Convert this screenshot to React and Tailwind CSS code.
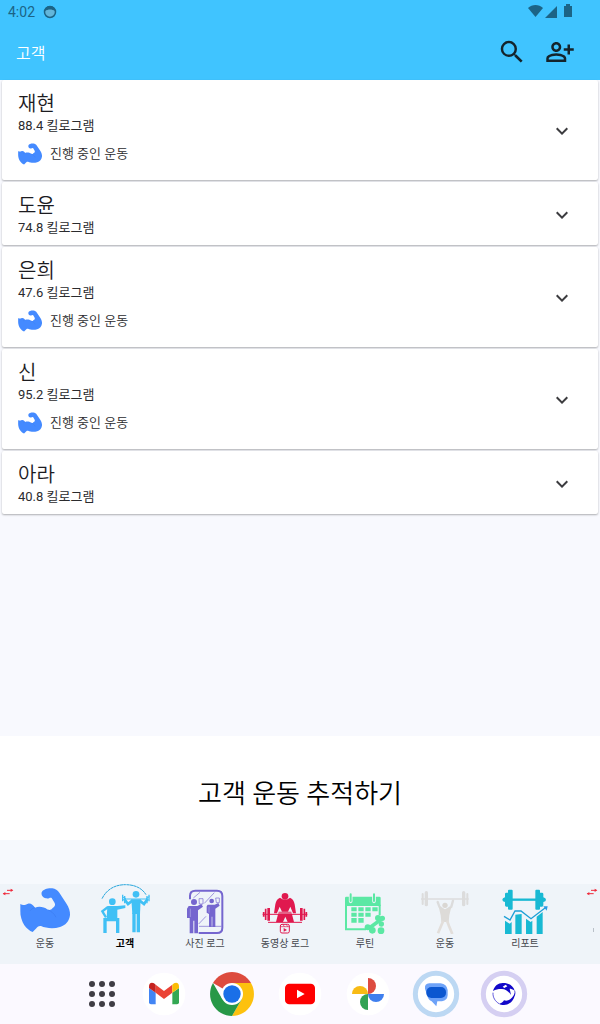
import { MdSearch, MdOutlinePersonAddAlt, MdExpandMore } from "react-icons/md";

const clients = [
  { name: "재현", weight: "88.4 킬로그램", active: true },
  { name: "도윤", weight: "74.8 킬로그램", active: false },
  { name: "은희", weight: "47.6 킬로그램", active: true },
  { name: "신", weight: "95.2 킬로그램", active: true },
  { name: "아라", weight: "40.8 킬로그램", active: false },
];

const MUSCLE =
  "M61 84C70 90 76 86 84 83C93 81 99 87 105 95C116 90 132 92 143 101C149 104 155 100 158 96C164 92 167 87 164 81L155 66C150 63 146 69 138 67C128 65 123 58 125 49C128 39 148 35 157 37C166 38 173 43 178 50L200 84C206 93 211 106 210 117C208 136 196 148 180 153C161 159 138 157 123 150C115 149 112 153 109 157L98 168C88 165 80 157 73 148C66 136 60 120 61 104Z";

function MuscleIcon({ className, viewBox = "60 30 150 144" }) {
  return (
    <svg viewBox={viewBox} className={className} aria-hidden="true">
      <path d={MUSCLE} fill="#448aff" />
      <path d="M143 101C152 105 162 111 168 124M105 95C99 97 94 99 91 104" fill="none" stroke="#3b7bf0" strokeWidth="2" />
    </svg>
  );
}

function ExerciseIcon() {
  return <MuscleIcon className="h-[50px] w-[54px]" viewBox="54 24 162 150" />;
}

function ClientsIcon() {
  return (
    <svg viewBox="294 24 162 150" className="h-[50px] w-[54px]" fill="none" stroke="#40c0f5" aria-hidden="true">
      <path d="M306 68C322 36 350 26 376 26C404 26 426 36 438 56" strokeWidth="3" stroke="#2aa7dc" strokeDasharray="9 1" />
      <g fill="#40c0f5" stroke="none">
        <circle cx="337" cy="77" r="10" />
        <circle cx="408" cy="55" r="10" />
        <path d="M322 90H352L376 88V96L352 101V128H320Z" />
        <path d="M394 70H422L420 114H397Z" />
      </g>
      <path d="M324 93L307 106L318 124" strokeWidth="7" />
      <path d="M336 131H315V171M334 131H353V171" strokeWidth="10" />
      <path d="M366 62L380 69H436L448 62" strokeWidth="3" />
      <path d="M398 73L384 84L372 68M418 73L432 84L443 68" strokeWidth="8" />
      <path d="M368 56V76M374 60V82M441 60V82M447 56V76" strokeWidth="4" />
      <path d="M402 110V169M415 110V169" strokeWidth="10" />
    </svg>
  );
}

function PhotoLogIcon() {
  return (
    <svg viewBox="54 24 162 150" className="h-[50px] w-[54px]" fill="none" stroke="#7566cf" aria-hidden="true">
      <path d="M90 70V60Q90 44 106 44H171Q187 44 187 60V155Q187 171 171 171H116" strokeWidth="6" />
      <path d="M100 66L120 49M133 82L163 50M116 144L138 121M117 151H184" strokeWidth="2" />
      <g fill="#7566cf" stroke="none">
        <circle cx="102" cy="78" r="9" />
        <circle cx="155" cy="75" r="7" />
        <path d="M86 90H112L124 84L129 92L114 103V172H103V134H100V172H89V126H81V98Z" />
        <path d="M143 86H164L175 81L179 89L166 98V153H157V122H155V153H147V114L140 110V91Z" />
      </g>
      <path d="M117 68H129V84H118ZM167 66H178V80H169Z" strokeWidth="2" />
      <path d="M91 98V123M147 92V110" stroke="#eff4f9" strokeWidth="1" />
    </svg>
  );
}

function VideoLogIcon() {
  return (
    <svg viewBox="294 24 162 150" className="h-[50px] w-[54px]" fill="none" stroke="#e0194f" aria-hidden="true">
      <path d="M308 115H442" strokeWidth="3" />
      <path d="M311 108V122M317 98V132M433 98V132M439 108V122" strokeWidth="5" />
      <path d="M326 96V134M424 96V134" strokeWidth="8" />
      <g fill="#e0194f" stroke="none">
        <circle cx="375" cy="61" r="10" />
        <path d="M360 65Q375 76 390 65Q401 69 404 85L408 112H399L391 92L384 107H366L359 92L351 112H342L346 85Q349 69 360 65Z" />
        <path d="M356 107H394L402 138H383L376 122L369 138H348Z" />
      </g>
      <path d="M352 111H398" stroke="#eff4f9" strokeWidth="2" />
      <path d="M324 139H426" strokeWidth="3" />
      <rect x="361" y="145" width="27" height="26" rx="5" fill="#eff4f9" strokeWidth="3" />
      <path d="M361 152H388M369 145L373 152M379 145L383 152" strokeWidth="2" />
      <path d="M371 156L381 162L371 167Z" fill="#e0194f" stroke="none" />
    </svg>
  );
}

function RoutineIcon() {
  return (
    <svg viewBox="54 24 162 150" className="h-[50px] w-[54px]" fill="none" stroke="#5be8a4" aria-hidden="true">
      <path d="M75 66Q75 62 79 62H178Q182 62 182 66V90H75Z" fill="#5be8a4" stroke="none" />
      <path d="M78 86V160H138M179 86V118" strokeWidth="6" />
      <path d="M92 54V76M162 54V76" stroke="#eff4f9" strokeWidth="11" strokeLinecap="round" />
      <path d="M92 55V75M162 55V75" strokeWidth="6" strokeLinecap="round" />
      <path
        d="M96 96H108V104H96ZM117 96H129V104H117ZM138 96H150V104H138ZM159 96H171V104H159ZM96 112H108V120H96ZM117 112H129V120H117ZM138 112H150V120H138ZM96 128H108V138H96ZM117 128H129V138H117Z"
        fill="#5be8a4"
        strokeWidth="4"
      />
      <path d="M148 156L184 130" strokeWidth="11" />
      <g fill="#5be8a4" stroke="none">
        <circle cx="143" cy="154" r="9" />
        <circle cx="157" cy="163" r="10" />
        <circle cx="174" cy="126" r="9" />
        <circle cx="187" cy="127" r="8" />
        <circle cx="184" cy="144" r="8" />
        <circle cx="183" cy="164" r="10" />
      </g>
    </svg>
  );
}

function WorkoutIcon() {
  return (
    <svg viewBox="294 24 162 150" className="h-[50px] w-[54px]" fill="none" stroke="#dcdcdc" aria-hidden="true">
      <path d="M303 69H446" strokeWidth="4" />
      <path d="M308 54V84M442 54V84" strokeWidth="6" strokeLinecap="round" />
      <path d="M319 50V86M431 50V86" strokeWidth="10" strokeLinecap="round" />
      <path d="M353 78L358 92L370 102M399 74L394 92L380 102" strokeWidth="7" strokeLinecap="round" />
      <circle cx="375" cy="88" r="8" fill="#dad7d3" stroke="none" />
      <path d="M356 92L375 100L394 92L388 118L386 138H364L362 118Z" fill="#dddbd8" stroke="none" />
      <path d="M370 134L364 148L354 172M381 134L387 150L397 174" strokeWidth="8" stroke="#e2deda" strokeLinejoin="round" />
    </svg>
  );
}

function ReportIcon() {
  return (
    <svg viewBox="84 24 162 150" className="h-[50px] w-[54px]" fill="none" stroke="#18b9d3" aria-hidden="true">
      <path d="M124 71H202" strokeWidth="7" />
      <g fill="#18b9d3" stroke="none">
        <path d="M128 44Q128 41 125 41H117Q114 41 114 44V50H109Q105 50 105 54V64Q97 66 97 71Q97 76 105 78V88Q105 92 109 92H114V98Q114 101 117 101H125Q128 101 128 98Z" />
        <path d="M196 44Q196 41 199 41H207Q210 41 210 44V50H216Q220 50 220 54V64Q228 66 228 71Q228 76 220 78V88Q220 92 216 92H210V98Q210 101 207 101H199Q196 101 196 98Z" />
        <path d="M105 134L119 143L125 138V176H105ZM136 116L155 114V176H136ZM168 128L182 138L187 134V176H168ZM200 122L218 108V176H200Z" />
      </g>
      <path d="M102 121L120 132L135 105H153L183 128L226 95" stroke="#1d9fd6" strokeWidth="4" />
      <path d="M220 91H233L230 104Z" fill="#2b9be6" stroke="none" />
    </svg>
  );
}

function SwapArrows({ className }) {
  return (
    <svg viewBox="0 0 36 24" className={className} fill="none" stroke="#ef2b3d" strokeWidth="3" aria-hidden="true">
      <path d="M15 7H31M4 17H23" />
      <path d="M26 2L34 7L26 12ZM10 12L2 17L10 22Z" fill="#ef2b3d" stroke="none" />
    </svg>
  );
}

const tabs = [
  { label: "운동", icon: ExerciseIcon },
  { label: "고객", icon: ClientsIcon, current: true },
  { label: "사진 로그", icon: PhotoLogIcon },
  { label: "동영상 로그", icon: VideoLogIcon },
  { label: "루틴", icon: RoutineIcon },
  { label: "운동", icon: WorkoutIcon },
  { label: "리포트", icon: ReportIcon },
];

function GmailIcon() {
  return (
    <svg viewBox="210 30 144 144" className="size-12" aria-hidden="true">
      <circle cx="282" cy="102" r="64" fill="#fff" />
      <path d="M237 84L257 98V133H243Q237 133 237 127Z" fill="#4285f4" />
      <path d="M327 84L307 98V133H321Q327 133 327 127Z" fill="#34a853" />
      <path d="M257 74L282 93L307 74V98L282 117L257 98Z" fill="#ea4335" />
      <path d="M237 79C237 67 247 66 252 70L257 74V98L237 84Z" fill="#c5221f" />
      <path d="M327 79C327 67 317 66 312 70L307 74V98L327 84Z" fill="#fbbc04" />
    </svg>
  );
}

function ChromeIcon() {
  return (
    <svg viewBox="414 30 144 144" className="size-12" aria-hidden="true">
      <path d="M486 102L429 69A66 66 0 0 1 543 69Z" fill="#dd4b3e" />
      <path d="M486 69H543A66 66 0 0 1 486 168L515 118Z" fill="#fdc10e" />
      <path d="M429 69A66 66 0 0 0 486 168L515 118L486 102L457 118Z" fill="#279847" />
      <circle cx="486" cy="102" r="33" fill="#fff" />
      <circle cx="486" cy="102" r="26" fill="#1a6fe8" />
    </svg>
  );
}

function YoutubeIcon() {
  return (
    <svg viewBox="48 30 144 144" className="size-12" aria-hidden="true">
      <circle cx="120" cy="102" r="64" fill="#fff" />
      <rect x="75" y="71" width="90" height="62" rx="13" fill="#f00" />
      <path d="M111 89L134 102L111 115Z" fill="#fff" />
    </svg>
  );
}

function PhotosIcon() {
  return (
    <svg viewBox="252 30 144 144" className="size-12" aria-hidden="true">
      <circle cx="324" cy="102" r="64" fill="#fff" />
      <path d="M324 54A24 24 0 0 1 324 102Z" fill="#dd4b40" />
      <path d="M276 102A24 24 0 0 1 324 102Z" fill="#f8bb15" />
      <path d="M324 102A24 24 0 0 0 324 150Z" fill="#32a354" />
      <path d="M324 102A24 24 0 0 0 372 102Z" fill="#3f7fee" />
    </svg>
  );
}

function MessagesIcon() {
  return (
    <svg viewBox="36 30 144 144" className="size-12" aria-hidden="true">
      <circle cx="108" cy="102" r="62" fill="#fff" stroke="#bcd8f3" strokeWidth="15" />
      <path d="M88 70H122Q140 72 143 90V106Q142 121 126 124H112L109 139L95 124Q85 120 82 108L75 86Q73 71 88 70Z" fill="#6ea3f8" />
      <rect x="79" y="81" width="59" height="33" rx="15" fill="#0b57d0" />
    </svg>
  );
}

function SwirlIcon() {
  return (
    <svg viewBox="240 30 144 144" className="size-12" aria-hidden="true">
      <circle cx="312" cy="102" r="62" fill="#fff" stroke="#d5cff2" strokeWidth="15" />
      <path d="M279 93C283 77 296 68 310 69C327 69 340 78 344 92C338 87 333 86 329 86L333 105C326 93 314 86 304 87C294 87 287 89 279 93Z" fill="#1208c9" />
      <path d="M308 80L317 74L322 79L313 84Z" fill="#fff" />
      <path d="M345 97C345 121 329 135 312 135C305 135 301 134 297 131C304 130 309 127 312 121C327 125 339 115 345 97Z" fill="#1208c9" />
      <path d="M279 98C278 113 286 124 297 131M344 92Q347 98 343 108" fill="none" stroke="#1208c9" strokeWidth="2" />
    </svg>
  );
}

const apps = [
  { name: "Gmail", icon: GmailIcon },
  { name: "Chrome", icon: ChromeIcon },
  { name: "YouTube", icon: YoutubeIcon },
  { name: "Photos", icon: PhotosIcon },
  { name: "Messages", icon: MessagesIcon },
  { name: "Recent", icon: SwirlIcon },
];

function StatusBar() {
  return (
    <div className="flex h-6 items-center px-2 text-[#1c6486]">
      <span className="text-sm">4:02</span>
      <svg viewBox="0 0 14 14" className="ml-2 size-[14px]" aria-hidden="true">
        <circle cx="7" cy="7" r="5.5" fill="#63b6da" stroke="currentColor" strokeWidth="1.5" />
        <path d="M2 6C2 3 4 1 7 1S12 3 12 6C9 4 5 4 2 6Z" fill="currentColor" />
      </svg>
      <svg viewBox="0 0 46 16" className="mr-[18px] ml-auto h-4 w-[46px]" fill="currentColor" aria-hidden="true">
        <path d="M0 4C4 0 11 0 15 4L7.5 13Z" />
        <path d="M17 14L29 2V14Z" />
        <path d="M36 2H38V0H42V2H44V13H36Z" />
      </svg>
    </div>
  );
}

function ClientCard({ client }) {
  return (
    <li className="flex items-center rounded-xs bg-white pr-6 pl-4 shadow-[0_1px_2px_rgba(0,0,0,0.3)]">
      <div className="flex-1 pt-3 pb-2">
        <h2 className="text-xl leading-6 font-[350] text-[#1c1b1f]">{client.name}</h2>
        <p className="text-[13px] leading-[19px] text-[#2b2b2e]">{client.weight}</p>
        {client.active && (
          <p className="mt-[7px] mb-1.5 flex items-center gap-2 text-[13px] leading-6 font-[350] text-[#2b2b2e]">
            <MuscleIcon className="size-6" />
            진행 중인 운동
          </p>
        )}
      </div>
      <button aria-label={`${client.name} 펼치기`} className="pt-0.5 text-[#3c3c3f]">
        <MdExpandMore size={24} />
      </button>
    </li>
  );
}

export default function App() {
  return (
    <div className="flex min-h-screen flex-col bg-[#f8f9fe] font-[Roboto,'Noto_Sans_CJK_KR',sans-serif]">
      <header className="bg-[#40c4ff]">
        <StatusBar />
        <div className="flex h-14 items-center pr-[25px] pl-4">
          <h1 className="flex-1 pt-1 text-base font-[350] text-white">고객</h1>
          <div className="flex gap-[18px] text-[#14242c]">
            <button aria-label="검색">
              <MdSearch size={30} />
            </button>
            <button aria-label="고객 추가">
              <MdOutlinePersonAddAlt size={30} />
            </button>
          </div>
        </div>
      </header>

      <main className="flex-1">
        <ul className="flex flex-col gap-0.5 px-0.5">
          {clients.map((client) => (
            <ClientCard key={client.name} client={client} />
          ))}
        </ul>
      </main>

      {/* Caption */}
      <section className="bg-white pt-[38px] pb-[26px] text-center">
        <p className="text-[26px] leading-10 font-[350] text-black">고객 운동 추적하기</p>
      </section>
      <div className="h-11 bg-[#f6f9fd]" />

      {/* Tabs */}
      <nav className="relative bg-[#eff4f9] px-[5px] pb-2.5">
        <SwapArrows className="absolute top-1 left-0.5 h-2 w-3" />
        <ul className="flex">
          {tabs.map((tab, i) => {
            const Icon = tab.icon;
            return (
              <li key={i} className="w-20">
                <a
                  href="#"
                  aria-current={tab.current ? "page" : undefined}
                  className={`flex flex-col items-center text-[10px] leading-5 ${
                    tab.current ? "font-bold text-black" : "text-[#45474d]"
                  }`}
                >
                  <Icon />
                  {tab.label}
                </a>
              </li>
            );
          })}
        </ul>
        <SwapArrows className="absolute top-1 right-0.5 h-2 w-3" />
        <span className="absolute top-11 right-1.5 h-1 w-px bg-[#b9c0c8]" />
      </nav>

      {/* Dock */}
      <footer className="flex h-[60px] items-center justify-center bg-[#fbf9ff] pl-3">
        <button aria-label="모든 앱" className="flex w-14 justify-center">
          <svg viewBox="0 0 26 26" className="size-[26px]" fill="#3f3d45" aria-hidden="true">
            {[3, 13, 23].map((y) => [3, 13, 23].map((x) => <circle key={`${x}-${y}`} cx={x} cy={y} r="3" />))}
          </svg>
        </button>
        {apps.map((app) => {
          const Icon = app.icon;
          return (
            <button key={app.name} aria-label={app.name} className="flex w-[68px] justify-center">
              <Icon />
            </button>
          );
        })}
      </footer>
    </div>
  );
}
